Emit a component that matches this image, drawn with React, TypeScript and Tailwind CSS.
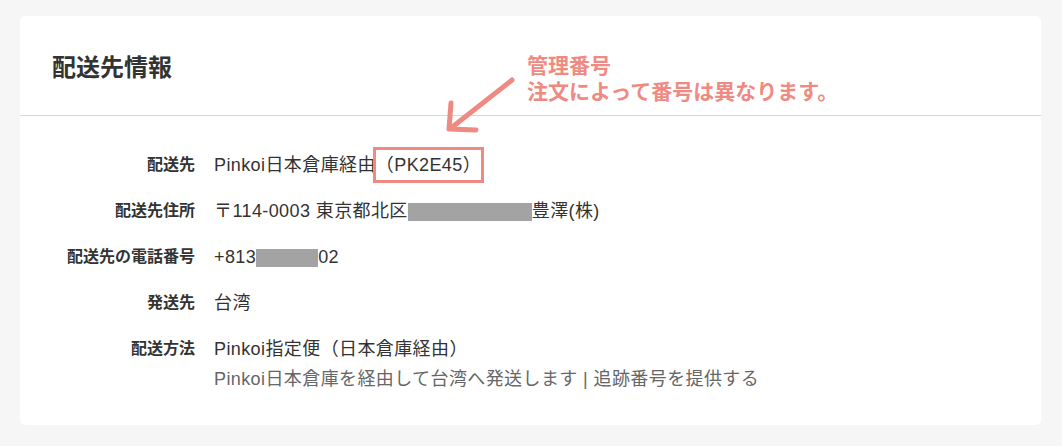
import React from "react";

const Row = ({ label, children }: { label: string; children: React.ReactNode }) => (
  <>
    <div className="text-right text-[16px] font-bold leading-[30px] text-[#333333]">{label}</div>
    <div className="text-[18px] leading-[30px] tracking-[0.4px] text-[#333333]">{children}</div>
  </>
);

export default function App() {
  return (
    <div
      className="min-h-[446px] w-[1062px] bg-[#f6f6f6] pt-[16px]"
      style={{ fontFamily: '"Liberation Sans", "Noto Sans CJK JP", sans-serif' }}
    >
      <div className="relative ml-[20px] w-[1021px] rounded-[5px] bg-white">
        <div className="flex h-[100px] items-center border-b border-[#d8d8d8] pl-[32px]">
          <h1
            className="text-[24px] font-bold text-[#333333]"
            style={{ fontFamily: '"Noto Sans CJK JP", sans-serif' }}
          >
            配送先情報
          </h1>
        </div>
        <div className="grid grid-cols-[175px_1fr] gap-x-[19px] gap-y-[16px] pt-[34px] pb-[31px]">
          <Row label="配送先">
            Pinkoi日本倉庫経由
            <span className="relative inline-block">
              （PK2E45）
              <span className="absolute -inset-[3px] border-[3px] border-[#ef8a82]" />
            </span>
          </Row>
          <Row label="配送先住所">
            〒114-0003 東京都北区
            <span className="inline-block h-[18px] w-[124px] bg-[#a3a3a3] align-[-4px]" />
            豊澤(株)
          </Row>
          <Row label="配送先の電話番号">
            +813
            <span className="inline-block h-[18px] w-[62px] bg-[#a3a3a3] align-[-4px]" />
            02
          </Row>
          <Row label="発送先">台湾</Row>
          <Row label="配送方法">
            <div>Pinkoi指定便（日本倉庫経由）</div>
            <div className="text-[#666666]">Pinkoi日本倉庫を経由して台湾へ発送します | 追跡番号を提供する</div>
          </Row>
        </div>

        <div
          className="absolute left-[507px] top-[35px] flex flex-col text-[21px] font-bold text-[#ef8a82]"
          style={{ fontFamily: '"Noto Sans CJK JP", sans-serif' }}
        >
          <div className="h-[26px] leading-[26px]">管理番号</div>
          <div className="h-[26px] leading-[26px]">注文によって番号は異なります。</div>
        </div>
        <svg
          className="pointer-events-none absolute left-0 top-0"
          width="1021"
          height="200"
          viewBox="0 0 1021 200"
        >
          <g stroke="#ef8a82" strokeWidth="5" strokeLinecap="round" strokeLinejoin="round" fill="none">
            <line x1="492" y1="64" x2="431" y2="112" />
            <polyline points="431,87 429,113 456,114" />
          </g>
        </svg>
      </div>
    </div>
  );
}
